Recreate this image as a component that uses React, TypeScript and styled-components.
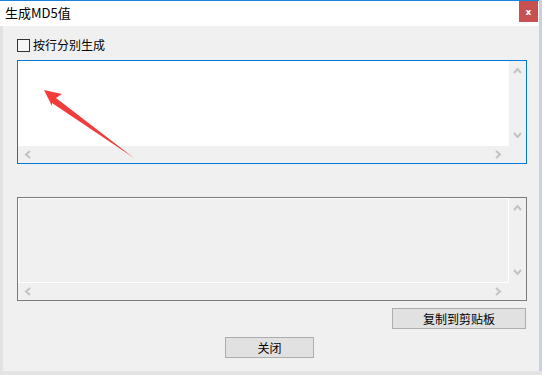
import styled, { createGlobalStyle } from "styled-components";

const GlobalStyle = createGlobalStyle`
  html, body {
    margin: 0;
    padding: 0;
    background: #e3e3e3;
    font-family: "Noto Sans CJK SC", "Noto Sans", sans-serif;
    font-size: 12px;
    color: #000;
  }
`;

const Window = styled.div`
  width: 539px;
  height: 371px;
  display: flex;
  flex-direction: column;
  background: #f0f0f0;
  box-shadow: 3px 0 0 #cdd0da;
`;

const TitleBar = styled.div`
  height: 26px;
  display: flex;
  align-items: center;
  justify-content: space-between;
  background: #fff;
  border-top: 1px solid #1883d7;
  box-sizing: border-box;
  padding-left: 5px;
`;

const Title = styled.span`
  font-size: 13px;
  line-height: 16px;
  margin-top: -2px;
`;

const CloseButton = styled.div`
  width: 19px;
  height: 21px;
  margin-right: 1px;
  align-self: flex-start;
  background: #c75050;
  color: #fff;
  font-family: "DejaVu Sans", sans-serif;
  font-size: 9px;
  font-weight: bold;
  display: flex;
  align-items: center;
  justify-content: center;
`;

const Body = styled.div`
  flex: 1;
  display: flex;
  flex-direction: column;
  padding: 12px 12px 0 14px;
  border-left: 3px solid #e2e2e2;
`;

const CheckRow = styled.label`
  display: flex;
  align-items: center;
  gap: 3px;
  height: 14px;
  line-height: 14px;
`;

const CheckBox = styled.span`
  width: 11px;
  height: 11px;
  border: 1px solid #333;
  background: #f7f7f7;
`;

const TextBox = styled.div<{ $active?: boolean }>`
  position: relative;
  width: 510px;
  height: 104px;
  box-sizing: border-box;
  border: 1px solid ${(p) => (p.$active ? "#0078d7" : "#7a7a7a")};
  display: grid;
  grid-template-columns: 1fr 17px;
  grid-template-rows: 1fr 17px;
  margin-top: ${(p) => (p.$active ? "8px" : "33px")};
`;

const Content = styled.div<{ $readonly?: boolean }>`
  background: ${(p) => (p.$readonly ? "#f0f0f0" : "#fff")};
  border: ${(p) => (p.$readonly ? "1px solid #fff" : "none")};
`;

const VScroll = styled.div`
  background: #f0f0f0;
  display: flex;
  flex-direction: column;
  justify-content: space-between;
  align-items: center;
  padding: 6px 0 7px;
`;

const HScroll = styled.div`
  grid-column: 1 / 3;
  background: #f0f0f0;
  display: flex;
  justify-content: space-between;
  align-items: center;
  padding: 0 24px 0 6px;
`;

const Chevron = ({ dir }: { dir: "up" | "down" | "left" | "right" }) => {
  const pts = {
    up: "1,6 4.5,2 8,6",
    down: "1,2 4.5,6 8,2",
    left: "6,1 2,4.5 6,8",
    right: "2,1 6,4.5 2,8",
  }[dir];
  const w = dir === "up" || dir === "down" ? 9 : 8;
  const h = dir === "up" || dir === "down" ? 8 : 9;
  return (
    <svg width={w} height={h} viewBox={`0 0 ${w} ${h}`}>
      <polyline points={pts} fill="none" stroke="#c2c2c2" strokeWidth="2" />
    </svg>
  );
};

const Arrow = styled.svg`
  position: absolute;
  left: 0;
  top: 0;
  pointer-events: none;
`;

const ButtonRow = styled.div<{ $align: string; $top: number; $shift?: number }>`
  display: flex;
  justify-content: ${(p) => p.$align};
  margin-top: ${(p) => p.$top}px;
  padding-right: ${(p) => p.$shift ?? 0}px;
  width: 510px;
  box-sizing: border-box;
`;

const Button = styled.button<{ $w: number }>`
  width: ${(p) => p.$w}px;
  height: 21px;
  padding: 0;
  background: #e1e1e1;
  border: 1px solid #adadad;
  font-family: "Noto Sans CJK SC", "Noto Sans", sans-serif;
  font-size: 12px;
  line-height: 17px;
  color: #000;
`;

const Scrollbars = () => (
  <>
    <VScroll>
      <Chevron dir="up" />
      <Chevron dir="down" />
    </VScroll>
    <HScroll>
      <Chevron dir="left" />
      <Chevron dir="right" />
    </HScroll>
  </>
);

export default function App() {
  return (
    <>
      <GlobalStyle />
      <Window>
        <TitleBar>
          <Title>生成MD5值</Title>
          <CloseButton>x</CloseButton>
        </TitleBar>
        <Body>
          <CheckRow>
            <CheckBox />
            按行分别生成
          </CheckRow>
          <TextBox $active>
            <Content />
            <Scrollbars />
            <Arrow width="510" height="104" viewBox="0 0 510 104">
              <polygon
                points="26,29 44,33 38,37 116,97 34,42 34,45"
                fill="#f23b3b"
              />
            </Arrow>
          </TextBox>
          <TextBox>
            <Content $readonly />
            <Scrollbars />
          </TextBox>
          <ButtonRow $align="flex-end" $top={7} $shift={1}>
            <Button $w={134}>复制到剪贴板</Button>
          </ButtonRow>
          <ButtonRow $align="center" $top={8} $shift={5}>
            <Button $w={89}>关闭</Button>
          </ButtonRow>
        </Body>
      </Window>
    </>
  );
}
